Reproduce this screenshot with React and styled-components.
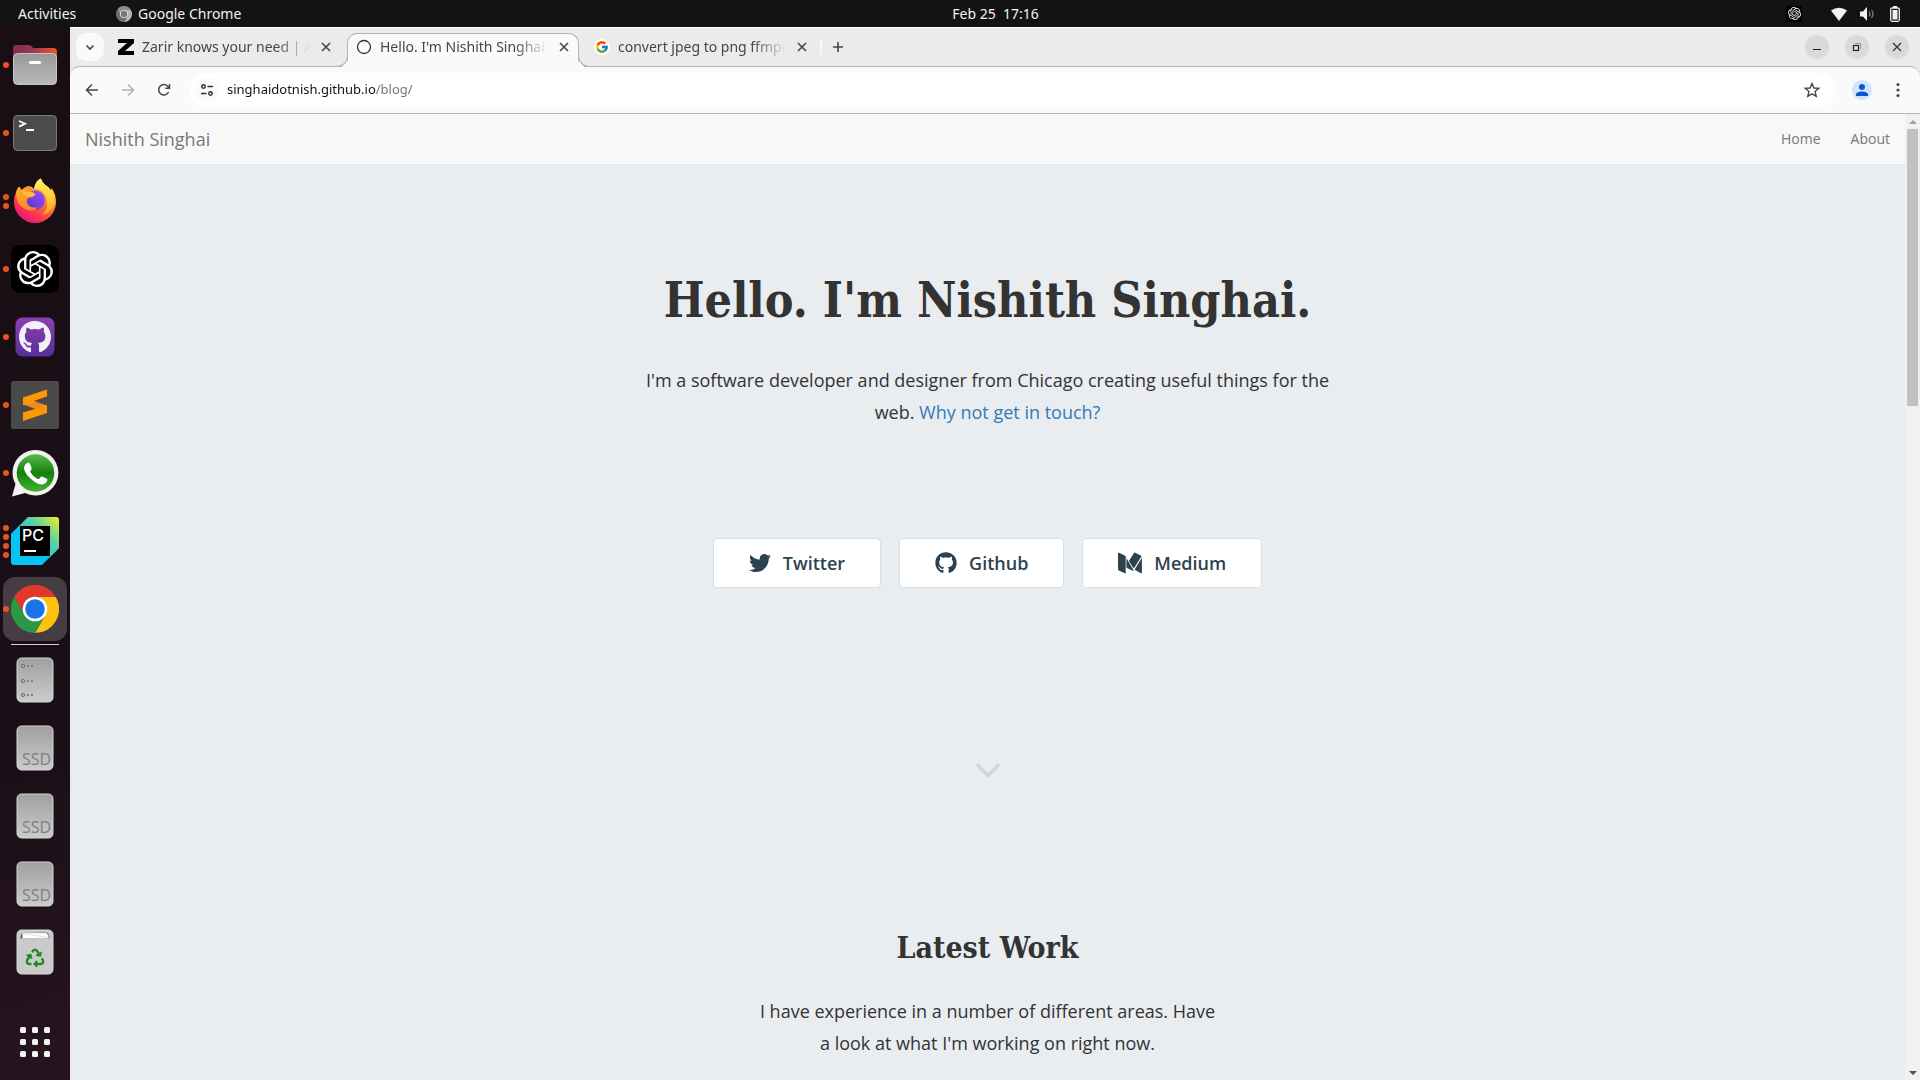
import React from "react";
import styled, { createGlobalStyle, css } from "styled-components";
import { FaTwitter, FaGithub, FaRecycle } from "react-icons/fa";
import { SiOpenai } from "react-icons/si";
import { FcGoogle } from "react-icons/fc";

const uiFont = `"Noto Sans", "Open Sans", sans-serif`;
const pageFont = `"Open Sans", "Noto Sans", sans-serif`;
const headingFont = `"DejaVu Serif Condensed", "DejaVu Serif", serif`;

const GlobalStyle = createGlobalStyle`
  *, *::before, *::after { box-sizing: border-box; }
  body { margin: 0; }
  button, input { font: inherit; color: inherit; border: 0; padding: 0; margin: 0; background: none; }
  button { cursor: pointer; }
  svg { display: block; flex: none; }
`;

/* ---------- desktop ---------- */

const Desktop = styled.div`
  display: flex;
  flex-direction: column;
  height: 100vh;
  overflow: hidden;
  font-family: ${uiFont};
  font-size: 14px;
`;

const TopBar = styled.header`
  display: grid;
  grid-template-columns: 70px 1fr auto 1fr;
  align-items: center;
  flex: none;
  height: 27px;
  padding: 0 17px 0 18px;
  background: #131313;
  color: #f2f2f2;
`;

const TopBarButton = styled.button`
  display: flex;
  align-items: center;
  gap: 6px;
  line-height: 27px;
  white-space: pre;
`;

const AppMenu = styled(TopBarButton)`
  margin-left: 28px;
`;

const Tray = styled.div`
  display: flex;
  align-items: center;
  justify-content: flex-end;
  gap: 12px;
`;

const TrayApp = styled.span`
  display: grid;
  place-items: center;
  width: 16px;
  height: 16px;
  margin-right: 17px;
  border-radius: 2px;
  background: #000;
`;

const Workspace = styled.div`
  display: flex;
  flex: 1;
  min-height: 0;
`;

/* ---------- dock ---------- */

const Dock = styled.nav`
  display: flex;
  flex-direction: column;
  flex: none;
  gap: 4px;
  width: 70px;
  padding: 6px 3px;
  background: linear-gradient(165deg, #190e14 0%, #1a0f16 65%, #27141f 100%);
`;

const DockButton = styled.button`
  display: flex;
  align-items: center;
  flex: none;
  width: 64px;
  height: 64px;
  border-radius: 12px;
  background: ${(p) => (p.$active ? "#453d43" : "transparent")};
`;

const Dots = styled.span`
  display: flex;
  flex-direction: column;
  gap: 3px;
  width: 8px;
`;

const Dot = styled.span`
  width: 6px;
  height: 6px;
  border-radius: 50%;
  background: #e95420;
`;

const DockRule = styled.hr`
  flex: none;
  width: 48px;
  height: 1px;
  margin: -1px auto;
  border: 0;
  background: #d5d2d4;
`;

const DockSpacer = styled.span`
  flex: 1;
`;

/* ---------- browser chrome ---------- */

const Browser = styled.section`
  display: flex;
  flex-direction: column;
  flex: 1;
  min-width: 0;
  background: #ebebeb;
  border-top: 1px solid #fdfdfd;
`;

const TabStrip = styled.div`
  display: flex;
  flex: none;
  align-items: flex-start;
  height: 38px;
  padding: 5px 11px 0 6px;
`;

const TabSearch = styled.button`
  display: grid;
  place-items: center;
  width: 28px;
  height: 28px;
  margin-right: 5px;
  border-radius: 10px;
  background: #fafafa;
`;

const Tabs = styled.div`
  display: flex;
  gap: 6px;
`;

const flare = css`
  content: "";
  position: absolute;
  bottom: 0;
  width: 11px;
  height: 11px;
  border: 1px solid #b2b2b2;
  border-top: 0;
`;

const Tab = styled.div`
  position: relative;
  display: flex;
  align-items: center;
  width: 232px;
  height: 34px;
  padding: 0 7px 6px 9px;
  color: #45464a;

  ${(p) =>
    p.$active &&
    css`
      z-index: 1;
      background: #fafafa;
      border: 1px solid #b2b2b2;
      border-width: 1px 1px 0;
      border-radius: 10px 10px 0 0;
      padding: 0 6px 7px 8px;

      &::before {
        ${flare}
        left: -11px;
        border-left: 0;
        border-bottom-right-radius: 11px;
        box-shadow: 5px 5px 0 0 #fafafa;
        clip-path: inset(0 -1px 0 0);
      }

      &::after {
        ${flare}
        right: -11px;
        border-right: 0;
        border-bottom-left-radius: 11px;
        box-shadow: -5px 5px 0 0 #fafafa;
        clip-path: inset(0 0 0 -1px);
      }
    `}
`;

const TabTitle = styled.button`
  flex: 1;
  min-width: 0;
  margin: 0 8px;
  overflow: hidden;
  white-space: nowrap;
  text-align: left;
  line-height: 20px;
  mask-image: linear-gradient(90deg, #000 calc(100% - 34px), transparent 100%);
`;

const TabClose = styled.button`
  display: grid;
  place-items: center;
  width: 16px;
  height: 16px;
`;

const TabDivider = styled.span`
  width: 2px;
  height: 16px;
  margin: 6px 6px 0 3px;
  border-radius: 1px;
  background: #fafafa;
`;

const NewTab = styled.button`
  display: grid;
  place-items: center;
  width: 20px;
  height: 28px;
`;

const WindowButtons = styled.div`
  display: flex;
  gap: 16px;
  margin-left: auto;
  padding-top: 2px;
`;

const WindowButton = styled.button`
  display: grid;
  place-items: center;
  width: 24px;
  height: 24px;
  border-radius: 50%;
  background: #dadada;
`;

const Toolbar = styled.div`
  display: flex;
  flex: none;
  align-items: center;
  height: 48px;
  padding: 0 14px 0 12px;
  border: 1px solid #b2b2b2;
  border-width: 1px 0;
  border-radius: 10px 10px 0 0;
  background: #fafafa;
`;

const ToolButton = styled.button`
  display: grid;
  place-items: center;
  width: 20px;
  height: 28px;
  margin-right: 16px;
  opacity: ${(p) => (p.disabled ? 0.4 : 1)};
`;

const Omnibox = styled.form`
  display: flex;
  align-items: center;
  flex: 1;
  height: 34px;
  padding: 0 15px 0 5px;
  border-radius: 17px;
  background: #fff;
`;

const SiteInfo = styled.button`
  display: grid;
  place-items: center;
  width: 24px;
  height: 24px;
  margin-right: 8px;
  border-radius: 50%;
  background: #fafafa;
`;

const UrlInput = styled.input`
  flex: 1;
  min-width: 0;
  height: 24px;
  padding-bottom: 2px;
  outline: 0;
  font-size: 13px;
  color: transparent;
  background: linear-gradient(90deg, #111 149px, #717171 149px);
  background-clip: text;
`;

const Star = styled.button`
  width: 18px;
  height: 18px;
`;

const Profile = styled.button`
  display: grid;
  place-items: center;
  width: 20px;
  height: 20px;
  margin: 0 18px 0 16px;
  border-radius: 50%;
  background: #d3e3fd;
`;

/* ---------- page ---------- */

const Viewport = styled.div`
  display: flex;
  flex: 1;
  min-height: 0;
`;

const Page = styled.div`
  flex: 1;
  overflow: hidden;
  background: #e9edf0;
  color: #333;
  font-family: ${pageFont};
  font-size: 18px;
  line-height: 32px;
`;

const SiteNav = styled.nav`
  display: flex;
  align-items: center;
  justify-content: space-between;
  height: 51px;
  padding: 0 15px;
  border-bottom: 1px solid #e7e7e7;
  background: #f8f8f8;
`;

const NavLinks = styled.div`
  display: flex;
  gap: 30px;
`;

const NavLink = styled.a`
  color: #777;
  font-size: ${(p) => (p.$brand ? 18 : 14)}px;
  line-height: 20px;
  text-decoration: none;
`;

const Hero = styled.section`
  display: flex;
  flex-direction: column;
  align-items: center;
  padding-top: 105px;
  text-align: center;
`;

const Title = styled.h1`
  margin: 0 0 34px;
  font: 700 48px/60px ${headingFont};
`;

const Lead = styled.p`
  width: 100%;
  max-width: ${(p) => p.$width}px;
  margin: 0 auto;
  text-align: center;
`;

const TextLink = styled.a`
  color: #337ab7;
  text-decoration: none;
`;

const SocialLinks = styled.div`
  display: flex;
  gap: 18px;
  margin-top: 110px;
`;

const SocialLink = styled.a`
  display: flex;
  align-items: center;
  gap: 12px;
  height: 50px;
  padding: 0 35px;
  border: 1px solid #d5e0e8;
  border-radius: 4px;
  background: #fff;
  color: #2c4251;
  font-weight: 600;
  text-decoration: none;
`;

const ScrollHint = styled.a`
  margin-top: 175px;
`;

const Work = styled.section`
  padding-top: 149px;
`;

const SectionTitle = styled.h2`
  display: flex;
  flex-direction: column;
  align-items: center;
  gap: 4px;
  margin: 0 0 20px;
  font: 700 30px/40px ${headingFont};

  &::after {
    content: "";
    width: 90px;
    height: 3px;
    background: #eceff3;
  }
`;

const ScrollBar = styled.div`
  display: flex;
  flex-direction: column;
  align-items: center;
  flex: none;
  width: 15px;
  background: #f1f1f1;
`;

const ScrollArrow = styled.button`
  display: grid;
  place-items: center;
  width: 15px;
  height: 15px;
`;

const ScrollTrack = styled.div`
  flex: 1;
`;

const ScrollThumb = styled.div`
  width: 11px;
  height: 277px;
  background: #c1c1c1;
`;

/* ---------- drawings ---------- */

const Glyph = ({ w = 16, h, d, sw = 1.6, color = "#45464a", cap = "butt" }) => (
  <svg width={w} height={h || w} viewBox={`0 0 ${w} ${h || w}`} fill="none" stroke={color} strokeWidth={sw} strokeLinecap={cap}>
    <path d={d} />
  </svg>
);

const closeCross = "M4 4 12 12M12 4 4 12";

function ChromeMark({ size, red, yellow, green, ring = "#fff", core }) {
  return (
    <svg width={size} height={size} viewBox="0 0 48 48">
      <path fill={red} d="M3.2 12A24 24 0 0 1 44.8 12H24A12 12 0 0 0 13.6 30Z" />
      <path fill={yellow} d="M44.8 12A24 24 0 0 1 24 48L34.4 30A12 12 0 0 0 24 12Z" />
      <path fill={green} d="M3.2 12A24 24 0 0 0 24 48L34.4 30A12 12 0 0 1 13.6 30Z" />
      <circle cx="24" cy="24" r="12.3" fill={ring} />
      <circle cx="24" cy="24" r="9.8" fill={core} />
    </svg>
  );
}

const Art = ({ children }) => (
  <svg width="48" height="48" viewBox="0 0 48 48">
    {children}
  </svg>
);

const Fade = ({ id, stops, ...rest }) => (
  <linearGradient id={id} x1="0" y1="0" x2="0" y2="1" {...rest}>
    {stops.map((c, i) => (
      <stop key={i} offset={i / (stops.length - 1)} stopColor={c} />
    ))}
  </linearGradient>
);

const FilesIcon = () => (
  <Art>
    <Fade id="f1" x2="1" y2="0" stops={["#7f2a55", "#a33852", "#ee5a24"]} />
    <Fade id="f2" stops={["#999", "#b9b9b9"]} />
    <path fill="url(#f1)" d="M2 20V7q0-3 3-3h13q2 0 3 1.500l1 1.500h20q4 0 4 4v9Z" />
    <rect x="2.500" y="12.500" width="43" height="31" rx="4" fill="url(#f2)" stroke="#c6c6c6" />
    <path d="M19.500 21.500h9" stroke="#fff" strokeWidth="3.200" strokeLinecap="round" />
  </Art>
);

const TerminalIcon = () => (
  <Art>
    <rect x="2.500" y="6.500" width="43" height="35" rx="4" fill="#4c4c4c" stroke="#7a7a7a" />
    <path d="M8 12l6 2.800-6 2.800M15 21h8" fill="none" stroke="#fff" strokeWidth="1.800" />
  </Art>
);

const FirefoxIcon = () => (
  <Art>
    <Fade id="ff1" x1="0.850" y1="0.050" x2="0.250" y2="1" stops={["#fff14f", "#ffb62e", "#ff6a34", "#ff3350", "#e31587"]} />
    <Fade id="ff2" x1="0.900" x2="0.100" stops={["#9a4dff", "#7a43e6", "#4b3bb8"]} />
    <Fade id="ff3" stops={["#fff36b", "#ffd23a", "#ffa02e"]} />
    <Fade id="ff4" x2="1" stops={["#ffb02a", "#ff7a2c"]} />
    <path fill="url(#ff1)" d="M5 15Q5.500 12 8 9.500L10.500 13Q14 9.500 17 9Q21 9 23 12Q24 4 30 1.500Q31 6 37 10Q39 11.500 40 13.500L40.500 11Q45 17 45 25A21 21 0 0 1 3 25Q3 19 5 15Z" />
    <path fill="url(#ff3)" d="M23 12Q24 4 30 1.500Q31 6 37 10Q44 16 43 26Q41 36 31 38Q38 32 36 23Q35 16 29 13Q26 11.500 23 12Z" />
    <circle cx="24.500" cy="23" r="9.500" fill="url(#ff2)" />
    <path fill="url(#ff4)" d="M8 9.500L10.500 13Q14 10 17 9.500Q16 12 17 14Q22 14 24.500 17.500Q23 20 18 20.500Q15 22 16 26Q19 32 27 30Q22 36 14 32Q5 27 5 16Q6 12 8 9.500Z" />
    <path fill="#ffbd3d" d="M10.500 13Q14 15 17 15Q23 15 24.500 17.500Q22 20 17 20Q11 18 10.500 13Z" />
  </Art>
);

const ChatGptIcon = () => (
  <Art>
    <rect width="48" height="48" rx="9" fill="#000" />
    <SiOpenai x="6" y="6" size={36} color="#fff" />
  </Art>
);

const GithubDesktopIcon = () => (
  <Art>
    <Fade id="gh" stops={["#8f3fae", "#55309a"]} />
    <rect x="4.500" y="4.500" width="39" height="39" rx="7" fill="url(#gh)" />
    <FaGithub x="7.500" y="7.500" size={33} color="#f3f1f6" />
  </Art>
);

const SublimeIcon = () => (
  <Art>
    <rect width="48" height="48" rx="2.500" fill="#4a4a4a" />
    <path fill="#ff9800" d="M12 16.500 36 8.500V15.500L12 23.500Z" />
    <path fill="#f08a1c" d="M12 23.500V16.500L36 24.500V32Z" />
    <path fill="#ff9800" d="M12 31.500 36 24.500V32L12 40Z" />
    <path fill="#ff9800" d="M12 16.500 26 21 12 24ZM36 32V24.500L27 27.500Z" />
  </Art>
);

const WhatsAppIcon = () => (
  <Art>
    <Fade id="wa" stops={["#5bb948", "#14800d", "#43b52c"]} />
    <path fill="#f2f2f2" d="M24.500 1A22.800 22.800 0 1 1 14 44L1 47.500 4.500 35A22.800 22.800 0 0 1 24.500 1Z" />
    <circle cx="24.500" cy="24" r="18.800" fill="url(#wa)" />
    <path fill="#fff" d="M17 13.500Q13 15.500 13 19.500Q14 25 20 30Q26 35.500 31 35.500Q35.500 35 36.500 30.500Q36 29.500 31 27.500Q30 27.300 28.500 29.500Q27.500 30.500 26 29.700Q21.500 27 19.300 23Q19 22 20 21.200Q21 20 20.500 18.500L18.800 14.500Q18 13.300 17 13.500Z" />
  </Art>
);

const PyCharmIcon = () => (
  <Art>
    <Fade id="pc" x1="0.300" y1="0.600" x2="1" y2="0" stops={["#14c3ec", "#5fd2a0", "#f4f11e"]} />
    <path fill="#07c3f2" d="M0 17 17 1H30L48 17V31L31 48H3Q0 48 0 45Z" />
    <path fill="url(#pc)" d="M0 17 17 0H45Q48 0 48 3V31L38 41V10H9L9 40 0 30Z" />
    <path fill="#07c3f2" d="M0 17 9 10V40L0 36Z" />
    <rect x="9" y="9" width="30" height="30" fill="#000" />
    <text x="11" y="24" fontFamily="Inter, sans-serif" fontWeight="500" fontSize="16" fill="#fff">PC</text>
    <rect x="13" y="33" width="12" height="2" fill="#fff" />
  </Art>
);

const Drive = ({ children }) => (
  <Art>
    <Fade id="dr" stops={["#a0a0a0", "#cbcbcb"]} />
    <rect x="6" y="2" width="36" height="44" rx="4.500" fill="url(#dr)" stroke="#d6d6d6" />
    {children}
  </Art>
);

const ServerIcon = () => (
  <Drive>
    {[10, 25, 39].map((y) => (
      <g key={y} fill="#808080">
        <circle cx="12" cy={y} r="1.700" fill="#9fca3c" stroke="#707070" />
        <rect x="16" y={y - 1} width="2" height="2" />
        <rect x="20" y={y - 1} width="2" height="2" />
      </g>
    ))}
  </Drive>
);

const SsdIcon = () => (
  <Drive>
    <text x="11" y="41" fontFamily="Open Sans, sans-serif" fontSize="16" fill="#7f7f7f">SSD</text>
  </Drive>
);

const TrashIcon = () => (
  <Art>
    <rect x="6" y="2" width="36" height="44" rx="4.500" fill="#cacaca" stroke="#d8d8d8" />
    <path fill="#555" d="M9.500 10.500Q9.500 4.500 13.500 4.500H34.500Q38.500 4.500 38.500 10.500Z" />
    <path fill="#fff" stroke="#bbb" strokeWidth="0.500" d="M11.500 10.500V4.500L35.500 5 37.500 7.500V10.500ZM12.500 5.500 37.500 9.500" />
    <FaRecycle x="14.500" y="20.500" size={19} color="#218a1c" />
  </Art>
);

const AppsIcon = () => (
  <Art>
    {[9, 21, 33].flatMap((y) => [9, 21, 33].map((x) => <rect key={`${x}-${y}`} x={x} y={y} width="6" height="6" rx="1.500" fill="#f2f2f2" />))}
  </Art>
);

const MediumMark = () => (
  <svg width="24" height="22" viewBox="0 0 25 22" fill="currentColor">
    <path d="M0 1Q0 0 1 .3L8 3.800V21.500Q8 22.300 7 21.800L.8 18.700Q0 18.200 0 17.500Z" />
    <path d="M11.300 8.800 16.700.5Q17.200 0 18 .3L24.600 3.700 17.200 15.800 16.200 16.500Z" />
    <path d="M8.800 6 16.400 18.700Q16 19.300 15.300 19L8.800 15.900Z" />
    <path d="M24.900 5.200V21Q24.900 22 23.900 21.600L17.300 18Z" />
  </svg>
);

/* ---------- data ---------- */

const dockApps = [
  { name: "Files", dots: 1, Icon: FilesIcon },
  { name: "Terminal", dots: 1, Icon: TerminalIcon },
  { name: "Firefox", dots: 2, Icon: FirefoxIcon },
  { name: "ChatGPT", dots: 1, Icon: ChatGptIcon },
  { name: "GitHub Desktop", dots: 1, Icon: GithubDesktopIcon },
  { name: "Sublime Text", dots: 1, Icon: SublimeIcon },
  { name: "WhatsApp", dots: 1, Icon: WhatsAppIcon },
  { name: "PyCharm", dots: 4, Icon: PyCharmIcon },
  {
    name: "Google Chrome",
    dots: 1,
    active: true,
    Icon: () => <ChromeMark size={48} red="#e2382b" yellow="#fcc111" green="#2b9847" core="#1a73e8" />,
  },
];

const dockPlaces = [
  { name: "Server", Icon: ServerIcon },
  { name: "Drive 1", Icon: SsdIcon },
  { name: "Drive 2", Icon: SsdIcon },
  { name: "Drive 3", Icon: SsdIcon },
  { name: "Trash", Icon: TrashIcon },
];

const tabs = [
  {
    title: "Zarir knows your need | AI",
    icon: (
      <svg width="16" height="16" viewBox="0 0 16 16">
        <path d="M0 0H16V4L7 12H16V16H0V12L9 4H0Z" />
      </svg>
    ),
  },
  {
    title: "Hello. I'm Nishith Singhai.",
    active: true,
    icon: (
      <svg width="16" height="16" viewBox="0 0 16 16">
        <circle cx="8" cy="8" r="6.500" fill="none" stroke="#333" strokeWidth="1.300" />
      </svg>
    ),
  },
  {
    title: "convert jpeg to png ffmpeg",
    icon: (
      <svg width="16" height="16" viewBox="0 0 16 16">
        <circle cx="8" cy="8" r="8" fill="#fff" />
        <FcGoogle x="1" y="1" size={14} />
      </svg>
    ),
  },
];

const socials = [
  { label: "Twitter", icon: <FaTwitter size={22} /> },
  { label: "Github", icon: <FaGithub size={22} /> },
  { label: "Medium", icon: <MediumMark /> },
];

function DockItem({ name, dots = 0, active, Icon }) {
  return (
    <DockButton aria-label={name} $active={active}>
      <Dots>
        {Array.from({ length: dots }, (_, i) => (
          <Dot key={i} />
        ))}
      </Dots>
      <Icon />
    </DockButton>
  );
}

export default function App() {
  return (
    <Desktop>
      <GlobalStyle />
      <TopBar>
        <TopBarButton>Activities</TopBarButton>
        <AppMenu>
          <ChromeMark size={16} red="#8c8c8c" yellow="#b5b5b5" green="#6f6f6f" ring="#f2f2f2" core="#777" />
          Google Chrome
        </AppMenu>
        <TopBarButton>{"Feb 25  17:16"}</TopBarButton>
        <Tray>
          <TrayApp>
            <SiOpenai size={13} />
          </TrayApp>
          <svg width="16" height="16" viewBox="0 0 16 16">
            <path fill="#f2f2f2" d="M0 4.500Q8-1 16 4.500L8 15Z" />
          </svg>
          <svg width="16" height="16" viewBox="0 0 16 16">
            <path fill="#f2f2f2" d="M1 5.500H4L8 1V15L4 10.500H1Z" />
            <path d="M10 5.500q2 2.500 0 5M12.500 4q3 4 0 8" fill="none" stroke="#8b8b8b" strokeWidth="1.200" />
          </svg>
          <svg width="16" height="16" viewBox="0 0 16 16">
            <path fill="#f2f2f2" d="M6 0h4v2H6Z" />
            <rect x="3.700" y="2" width="8.600" height="13.300" rx="1.500" fill="none" stroke="#f2f2f2" strokeWidth="1.300" />
            <rect x="5.500" y="4" width="5" height="9.500" fill="#f2f2f2" />
          </svg>
        </Tray>
      </TopBar>

      <Workspace>
        <Dock aria-label="Dock">
          {dockApps.map((app) => (
            <DockItem key={app.name} {...app} />
          ))}
          <DockRule />
          {dockPlaces.map((place) => (
            <DockItem key={place.name} {...place} />
          ))}
          <DockSpacer />
          <DockItem name="Show Applications" Icon={AppsIcon} />
        </Dock>

        <Browser>
          <TabStrip>
            <TabSearch aria-label="Search tabs">
              <Glyph d="M4.500 6.500 8 10 11.500 6.500" />
            </TabSearch>
            <Tabs>
              {tabs.map((tab) => (
                <Tab key={tab.title} $active={tab.active}>
                  {tab.icon}
                  <TabTitle>{tab.title}</TabTitle>
                  <TabClose aria-label="Close tab">
                    <Glyph d={closeCross} />
                  </TabClose>
                </Tab>
              ))}
            </Tabs>
            <TabDivider />
            <NewTab aria-label="New tab">
              <Glyph d="M8 3V13M3 8H13" />
            </NewTab>
            <WindowButtons>
              <WindowButton aria-label="Minimize">
                <Glyph d="M4 10.500H12" sw={1} color="#222" />
              </WindowButton>
              <WindowButton aria-label="Restore">
                <svg width="16" height="16" viewBox="0 0 16 16" fill="none">
                  <path d="M6 4.500H11.500V10" stroke="#999" />
                  <rect x="4.500" y="6.500" width="5" height="5" stroke="#222" strokeWidth="1.200" />
                </svg>
              </WindowButton>
              <WindowButton aria-label="Close window">
                <Glyph d={closeCross} sw={1.2} color="#333" />
              </WindowButton>
            </WindowButtons>
          </TabStrip>

          <Toolbar>
            <ToolButton aria-label="Back">
              <Glyph d="M14 8H3M8 2.500 2.500 8 8 13.500" sw={1.5} />
            </ToolButton>
            <ToolButton aria-label="Forward" disabled>
              <Glyph d="M2 8H13M8 2.500 13.500 8 8 13.500" sw={1.5} />
            </ToolButton>
            <ToolButton aria-label="Reload">
              <Glyph d="M12.600 10A5.200 5.200 0 1 1 12 4.600L13.500 6M13.500 2V6.200H9.300" sw={1.5} />
            </ToolButton>
            <Omnibox>
              <SiteInfo type="button" aria-label="Site information">
                <svg width="14" height="14" viewBox="0 0 14 14" fill="none" stroke="#333" strokeWidth="1.500">
                  <circle cx="3.500" cy="3.500" r="1.700" />
                  <path d="M7.500 3.500H13M1 10.500H6.500" />
                  <circle cx="10.500" cy="10.500" r="1.700" />
                </svg>
              </SiteInfo>
              <UrlInput aria-label="Address" defaultValue="singhaidotnish.github.io/blog/" />
              <Star type="button" aria-label="Bookmark">
                <svg width="18" height="18" viewBox="0 0 18 18" fill="none" stroke="#45464a" strokeWidth="1.400">
                  <path d="M9 2.500 10.900 7 15.700 7.400 12.100 10.600 13.200 15.300 9 12.800 4.800 15.300 5.900 10.600 2.300 7.400 7.100 7Z" />
                </svg>
              </Star>
            </Omnibox>
            <Profile aria-label="Profile">
              <svg width="12" height="12" viewBox="0 0 12 12" fill="#0b57d0">
                <circle cx="6" cy="3" r="3" />
                <path d="M0 12V10Q1 7.500 6 7.500T12 10V12Z" />
              </svg>
            </Profile>
            <button aria-label="Menu">
              <svg width="16" height="16" viewBox="0 0 16 16" fill="#45464a">
                <circle cx="8" cy="2.500" r="1.600" />
                <circle cx="8" cy="8" r="1.600" />
                <circle cx="8" cy="13.500" r="1.600" />
              </svg>
            </button>
          </Toolbar>

          <Viewport>
            <Page>
              <SiteNav>
                <NavLink $brand href="#home">Nishith Singhai</NavLink>
                <NavLinks>
                  <NavLink href="#home">Home</NavLink>
                  <NavLink href="#about">About</NavLink>
                </NavLinks>
              </SiteNav>
              <Hero>
                <Title>Hello. I'm Nishith Singhai.</Title>
                <Lead $width={720}>
                  I'm a software developer and designer from Chicago creating useful things for the web.{" "}
                  <TextLink href="#contact">Why not get in touch?</TextLink>
                </Lead>
                <SocialLinks>
                  {socials.map((s) => (
                    <SocialLink key={s.label} href={`#${s.label}`}>
                      {s.icon}
                      {s.label}
                    </SocialLink>
                  ))}
                </SocialLinks>
                <ScrollHint href="#work" aria-label="Scroll to latest work">
                  <Glyph w={24} h={16} d="M2 2.500 12 12.500 22 2.500" sw={3.4} color="#c9d8e3" cap="round" />
                </ScrollHint>
              </Hero>
              <Work id="work">
                <SectionTitle>Latest Work</SectionTitle>
                <Lead $width={460}>
                  I have experience in a number of different areas. Have a look at what I'm working on right now.
                </Lead>
              </Work>
            </Page>
            <ScrollBar>
              <ScrollArrow aria-label="Scroll up">
                <svg width="8" height="4" viewBox="0 0 8 4" fill="#a0a0a0">
                  <path d="M0 4 4 0 8 4Z" />
                </svg>
              </ScrollArrow>
              <ScrollTrack>
                <ScrollThumb />
              </ScrollTrack>
              <ScrollArrow aria-label="Scroll down">
                <svg width="8" height="4" viewBox="0 0 8 4" fill="#505050">
                  <path d="M0 0 4 4 8 0Z" />
                </svg>
              </ScrollArrow>
            </ScrollBar>
          </Viewport>
        </Browser>
      </Workspace>
    </Desktop>
  );
}
